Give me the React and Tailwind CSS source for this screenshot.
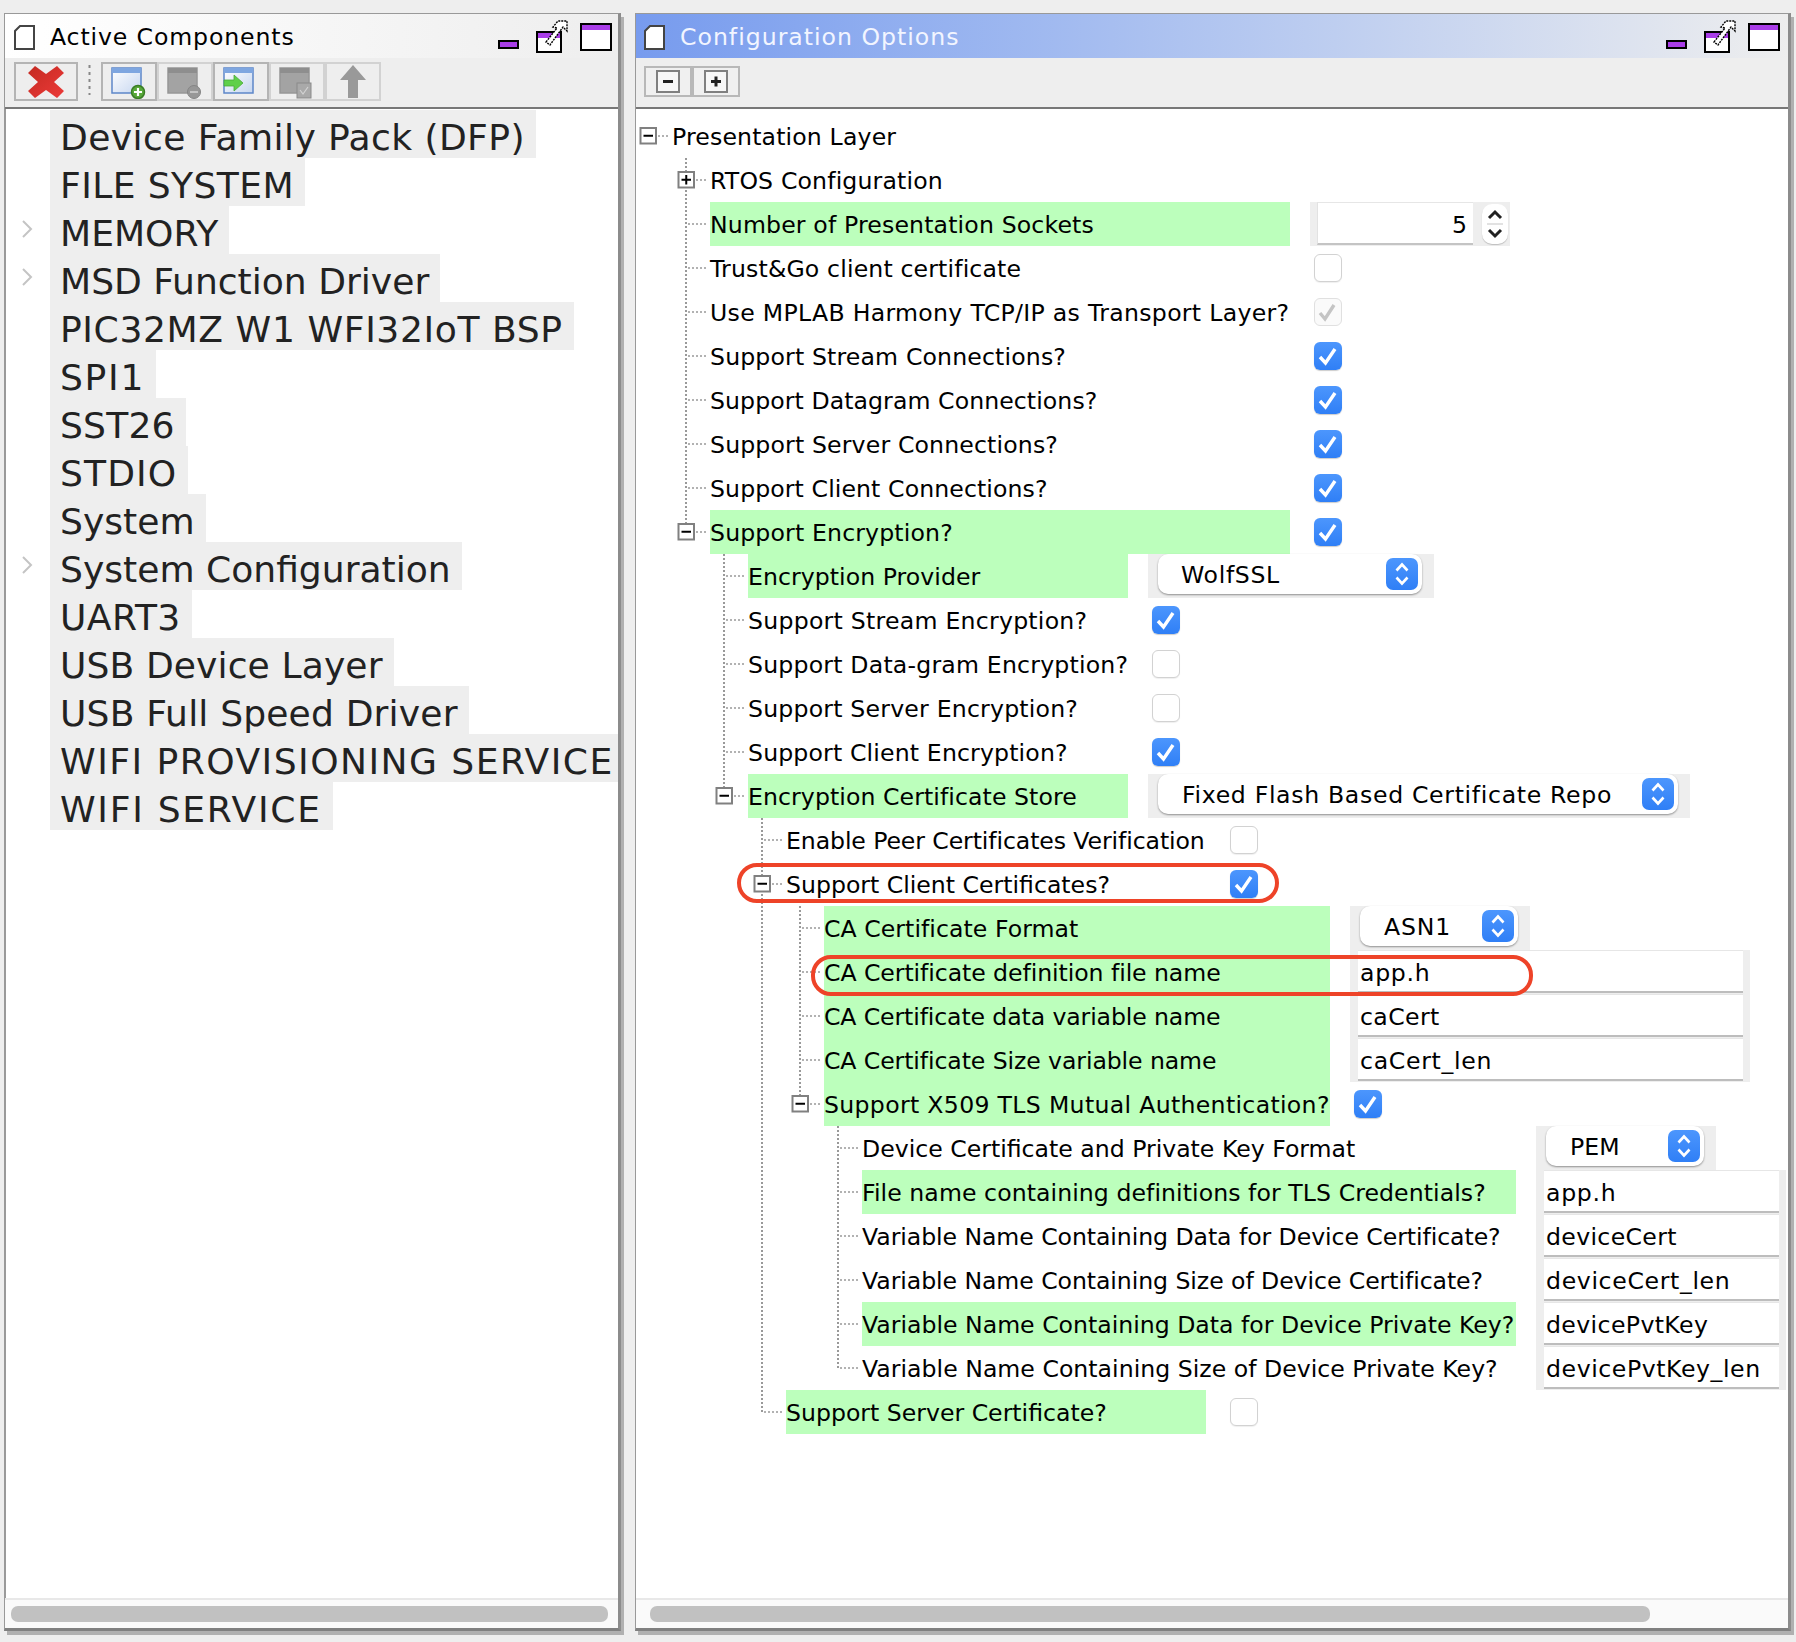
const leftItems = [
  { name: "Device Family Pack (DFP)", track: "tracking-[0.4px]" },
  { name: "FILE SYSTEM", track: "tracking-[0.4px]" },
  { name: "MEMORY" },
  { name: "MSD Function Driver" },
  { name: "PIC32MZ W1 WFI32IoT BSP", track: "tracking-[0.6px]" },
  { name: "SPI1", track: "tracking-[1.7px]" },
  { name: "SST26", track: "tracking-[0.2px]" },
  { name: "STDIO", track: "tracking-[1.1px]" },
  { name: "System" },
  { name: "System Configuration" },
  { name: "UART3", track: "tracking-[0.45px]" },
  { name: "USB Device Layer", track: "tracking-[0.1px]" },
  { name: "USB Full Speed Driver", track: "tracking-[0.16px]" },
  { name: "WIFI PROVISIONING SERVICE", track: "tracking-[1.46px]" },
  { name: "WIFI SERVICE", track: "tracking-[1.7px]" },
];

const hasChevron = ["MEMORY", "MSD Function Driver", "System Configuration"];

const L1 = 580;
const L2 = 380;
const L3 = 420;
const L4 = 506;
const L5 = 654;

const tree = {
  label: "Presentation Layer",
  open: true,
  children: [
    { label: "RTOS Configuration", closed: true },
    { label: "Number of Presentation Sockets", green: true, w: L1, control: { type: "spinner", value: "5" } },
    { label: "Trust&Go client certificate", w: L1, control: { type: "check" } },
    { label: "Use MPLAB Harmony TCP/IP as Transport Layer?", track: "tracking-[0.3px]", w: L1, control: { type: "disabled" } },
    { label: "Support Stream Connections?", w: L1, control: { type: "check", on: true } },
    { label: "Support Datagram Connections?", track: "tracking-[0.08px]", w: L1, control: { type: "check", on: true } },
    { label: "Support Server Connections?", w: L1, control: { type: "check", on: true } },
    { label: "Support Client Connections?", track: "tracking-[0.1px]", w: L1, control: { type: "check", on: true } },
    {
      label: "Support Encryption?",
      green: true,
      open: true,
      w: L1,
      control: { type: "check", on: true },
      children: [
        { label: "Encryption Provider", track: "tracking-[0.05px]", green: true, w: L2, control: { type: "select", value: "WolfSSL", width: "w-[286px]", pad: "pl-[23px]" } },
        { label: "Support Stream Encryption?", track: "tracking-[0.25px]", w: L2, control: { type: "check", on: true } },
        { label: "Support Data-gram Encryption?", track: "tracking-[0.2px]", w: L2, control: { type: "check" } },
        { label: "Support Server Encryption?", track: "tracking-[0.2px]", w: L2, control: { type: "check" } },
        { label: "Support Client Encryption?", track: "tracking-[0.15px]", w: L2, control: { type: "check", on: true } },
        {
          label: "Encryption Certificate Store",
          track: "tracking-[0.08px]",
          green: true,
          open: true,
          w: L2,
          control: { type: "select", value: "Fixed Flash Based Certificate Repo", track: "tracking-[0.67px]", width: "w-[542px]", pad: "pl-[24px]" },
          children: [
            { label: "Enable Peer Certificates Verification", track: "tracking-[-0.1px]", w: L3, control: { type: "check" } },
            {
              label: "Support Client Certificates?",
              track: "tracking-normal",
              open: true,
              w: L3,
              control: { type: "check", on: true },
              children: [
                { label: "CA Certificate Format", track: "tracking-[0.05px]", green: true, w: L4, control: { type: "select", value: "ASN1", track: "tracking-[0.85px]", width: "w-[180px]", pad: "pl-[24px]" } },
                { label: "CA Certificate definition file name", track: "tracking-[-0.07px]", green: true, w: L4, control: { type: "text", value: "app.h", track: "tracking-[0.7px]", width: "w-[400px]" } },
                { label: "CA Certificate data variable name", track: "tracking-[-0.12px]", green: true, w: L4, control: { type: "text", value: "caCert", track: "tracking-[0.4px]", width: "w-[400px]" } },
                { label: "CA Certificate Size variable name", track: "tracking-[-0.1px]", green: true, w: L4, control: { type: "text", value: "caCert_len", track: "tracking-[0.7px]", width: "w-[400px]" } },
                {
                  label: "Support X509 TLS Mutual Authentication?",
                  track: "tracking-[0.32px]",
                  green: true,
                  open: true,
                  w: L4,
                  control: { type: "check", on: true },
                  children: [
                    { label: "Device Certificate and Private Key Format", track: "tracking-normal", w: L5, control: { type: "select", value: "PEM", track: "tracking-normal", width: "w-[180px]", pad: "pl-[24px]" } },
                    { label: "File name containing definitions for TLS Credentials?", track: "tracking-[0.07px]", green: true, w: L5, control: { type: "text", value: "app.h", track: "tracking-[0.7px]", width: "w-[250px]" } },
                    { label: "Variable Name Containing Data for Device Certificate?", track: "tracking-[-0.07px]", w: L5, control: { type: "text", value: "deviceCert", track: "tracking-[0.34px]", width: "w-[250px]" } },
                    { label: "Variable Name Containing Size of Device Certificate?", track: "tracking-[-0.07px]", w: L5, control: { type: "text", value: "deviceCert_len", track: "tracking-[0.65px]", width: "w-[250px]" } },
                    { label: "Variable Name Containing Data for Device Private Key?", track: "tracking-normal", green: true, w: L5, control: { type: "text", value: "devicePvtKey", track: "tracking-[0.38px]", width: "w-[250px]" } },
                    { label: "Variable Name Containing Size of Device Private Key?", track: "tracking-[0.02px]", w: L5, control: { type: "text", value: "devicePvtKey_len", track: "tracking-[0.57px]", width: "w-[250px]" } },
                  ],
                },
              ],
            },
            { label: "Support Server Certificate?", track: "tracking-normal", green: true, w: L3, control: { type: "check" } },
          ],
        },
      ],
    },
  ],
};

function PageIcon() {
  return (
    <svg width="21" height="25" viewBox="0 0 21 25" className="shrink-0">
      <path d="M6 1H20V24H1V6Z" fill="#fff" stroke="#444" strokeWidth="2" />
    </svg>
  );
}

function MinIcon() {
  return (
    <svg width="21" height="9" viewBox="0 0 21 9" className="mt-[26px] shrink-0">
      <rect x="1" y="1" width="19" height="7" fill="#a93de8" stroke="#000" strokeWidth="2" />
    </svg>
  );
}

function RestoreIcon() {
  return (
    <svg width="32" height="33" viewBox="0 0 32 33" className="ml-[17px] mt-[6px] shrink-0">
      <rect x="1" y="12" width="24" height="20" fill="#fff" stroke="#000" strokeWidth="2" />
      <rect x="2" y="13" width="22" height="5" fill="#a93de8" />
      <path d="M10 22L21 8L17 7L22 1H31V11L27 7L14 25Z" fill="#fff" stroke="#000" strokeWidth="1.4" strokeDasharray="2 1" />
    </svg>
  );
}

function MaxIcon() {
  return (
    <svg width="32" height="28" viewBox="0 0 32 28" className="ml-3 mt-[9px] shrink-0">
      <rect x="1" y="1" width="30" height="26" fill="#fff" stroke="#000" strokeWidth="2" />
      <rect x="2" y="2" width="28" height="5" fill="#a93de8" />
    </svg>
  );
}

function WindowShape({ gray, children }) {
  const frame = gray ? "#979797" : "#5d87c9";
  return (
    <svg width="36" height="32" viewBox="0 0 36 32" className="mt-[2px]">
      <defs>
        <linearGradient id="winfill" x1="0" y1="0" x2="1" y2="1">
          <stop offset="0" stopColor="#ffffff" />
          <stop offset="1" stopColor="#c6d6f0" />
        </linearGradient>
      </defs>
      <rect x="1" y="1" width="29" height="25" fill={gray ? "#a3a3a3" : "url(#winfill)"} stroke={frame} strokeWidth="1.5" />
      <rect x="1" y="1" width="29" height="5" fill={gray ? "#8e8e8e" : "#7ea6e0"} />
      {children}
    </svg>
  );
}

function ToolButton({ enabled, children }) {
  return (
    <div className={`flex h-[39px] w-14 items-center justify-center border-2 ${enabled ? "border-[#b4b4b4]" : "border-[#d2d2d2]"}`}>
      {children}
    </div>
  );
}

function LeftToolbar() {
  return (
    <div className="flex h-[51px] items-start border-b-2 border-[#777] bg-[#eeeeee] pl-[9px] pt-1">
      <div className="flex h-[39px] w-16 items-center justify-center border-2 border-[#b4b4b4]">
        <svg width="38" height="34" viewBox="0 0 38 34">
          <defs>
            <linearGradient id="xfill" x1="0" y1="0" x2="1" y2="1">
              <stop offset="0" stopColor="#c42a22" />
              <stop offset="1" stopColor="#ec3a38" />
            </linearGradient>
          </defs>
          <path d="M1 8L8 1L19 9L30 1L37 8L27 17L37 26L30 33L19 25L8 33L1 26L11 17Z" fill="url(#xfill)" />
        </svg>
      </div>
      <svg width="3" height="30" viewBox="0 0 3 30" className="ml-[10px] mr-[10px] mt-[3px] shrink-0">
        <line x1="1.5" y1="0" x2="1.5" y2="30" stroke="#888" strokeWidth="2" strokeDasharray="3 4" />
      </svg>
      <ToolButton enabled>
        <WindowShape>
          <circle cx="27" cy="25" r="6.5" fill="#58a83a" stroke="#3a7d25" strokeWidth="1.5" />
          <path d="M27 21V29M23 25H31" stroke="#fff" strokeWidth="2.2" />
        </WindowShape>
      </ToolButton>
      <ToolButton>
        <WindowShape gray>
          <circle cx="27" cy="25" r="6.5" fill="#979797" stroke="#858585" />
          <path d="M23 25H31" stroke="#c4c4c4" strokeWidth="2" />
        </WindowShape>
      </ToolButton>
      <ToolButton enabled>
        <WindowShape>
          <path d="M1 13H11V8L20 16L11 24V19H1Z" fill="#5fd04a" stroke="#4aa838" strokeWidth="0.8" />
        </WindowShape>
      </ToolButton>
      <ToolButton>
        <WindowShape gray>
          <rect x="18" y="16" width="14" height="15" fill="#a9a9a9" stroke="#8a8a8a" />
          <path d="M21 23L24 27L29 20" fill="none" stroke="#d2d2d2" strokeWidth="1.2" />
        </WindowShape>
      </ToolButton>
      <ToolButton>
        <svg width="30" height="38" viewBox="0 0 30 38">
          <path d="M15 2L28 17H20V35H10V17H2Z" fill="#999" />
        </svg>
      </ToolButton>
    </div>
  );
}

function ExpandButton({ plus }) {
  return (
    <div className="flex h-[31px] w-12 items-center justify-center border-2 border-[#b8b8b8] bg-[#f0f0f0]">
      <svg width="24" height="23" viewBox="0 0 24 23">
        <rect x="1" y="1" width="22" height="21" fill="#f7f7f7" stroke="#808080" strokeWidth="2" />
        <path d={plus ? "M7 11.5H17M12 6.5V16.5" : "M7 11.5H17"} stroke="#222" strokeWidth="3" />
      </svg>
    </div>
  );
}

function RightToolbar() {
  return (
    <div className="flex h-[51px] items-start border-b-2 border-[#777] bg-[#eeeeee] pl-2 pt-2">
      <ExpandButton />
      <ExpandButton plus />
    </div>
  );
}

function ScrollBar({ thumb }) {
  return (
    <div className="h-[30px] shrink-0 border-t-2 border-[#e8e8e8] bg-[#fafafa] pt-[6px]">
      <div className={`h-4 rounded-[7px] bg-[#c1c1c1] ${thumb}`} />
    </div>
  );
}

// one indent column of the tree, drawn the way the swing tree paints it
function Connector({ through, branch, last, box }) {
  return (
    <svg width="38" height="44" viewBox="0 0 38 44" className="shrink-0">
      {through && (
        <line x1="14" y1="0" x2="14" y2={last ? 22 : 44} stroke="#999" strokeWidth="2" strokeDasharray="2 2" />
      )}
      {branch && <line x1="16" y1="22" x2="34" y2="22" stroke="#999" strokeWidth="1.5" strokeDasharray="2 2" />}
      {box && (
        <g>
          <rect x="6.5" y="14" width="15.5" height="15.5" fill="#fff" stroke="#808080" strokeWidth="2" />
          <path d={box === "plus" ? "M9.5 21.75H19M14.25 17V26.5" : "M9.5 21.75H19"} stroke="#000" strokeWidth="2" />
        </g>
      )}
    </svg>
  );
}

function CheckBox({ on, disabled }) {
  if (disabled) {
    return (
      <div className="ml-1 mt-2 h-7 w-7 rounded-[6px] border border-[#e0e0e0] bg-[#fafafa]">
        <svg width="26" height="26" viewBox="0 0 26 26">
          <path d="M5 14L10 20L19 6" fill="none" stroke="#c4c4c4" strokeWidth="3.4" />
        </svg>
      </div>
    );
  }
  if (on) {
    return (
      <div className="ml-1 mt-2 h-7 w-7 rounded-[6px] bg-linear-to-b from-[#4c96fd] to-[#2f7ff6] shadow-[0_1px_1px_#0003]">
        <svg width="28" height="28" viewBox="0 0 28 28">
          <path d="M6 15L11.5 21L21 7" fill="none" stroke="#fff" strokeWidth="3.4" />
        </svg>
      </div>
    );
  }
  return <div className="ml-1 mt-2 h-7 w-7 rounded-[6px] border border-[#d2d2d2] bg-white shadow-[0_1px_1px_#0001]" />;
}

function SelectBox({ value, width, pad, track }) {
  return (
    <div className={`h-full bg-[#eeeeee] pl-[10px] pr-3 ${width}`}>
      <div className={`flex h-10 items-center justify-between rounded-[10px] bg-white pr-[4px] shadow-[0_1px_2px_#0006] ${pad}`}>
        <span className={`pt-1 ${track || "tracking-[0.65px]"}`}>{value}</span>
        <div className="flex h-8 w-8 items-center justify-center rounded-[7px] bg-linear-to-b from-[#4c96fd] to-[#2f7ff6]">
          <svg width="16" height="26" viewBox="0 0 16 26">
            <path d="M2.5 9.5L8 3.5L13.5 9.5M2.5 16.5L8 22.5L13.5 16.5" fill="none" stroke="#fff" strokeWidth="2.6" />
          </svg>
        </div>
      </div>
    </div>
  );
}

function TextBox({ value, width, track }) {
  return (
    <div className={`h-full bg-[#eeeeee] pl-2 pr-[7px] ${width}`}>
      <div className={`flex h-[43px] items-center border-b-2 border-t border-b-[#bdbdbd] border-t-[#e6e6e6] bg-white pl-[2px] pt-[5px] ${track}`}>
        {value}
      </div>
    </div>
  );
}

function SpinnerBox({ value }) {
  return (
    <div className="flex h-full w-[200px] items-start bg-[#eeeeee] pl-[7px]">
      <div className="flex h-[43px] w-[156px] items-center justify-end border-b-2 border-l border-t border-b-[#c4c4c4] border-l-[#e2e2e2] border-t-[#e6e6e6] bg-white pr-[6px] pt-[5px]">
        {value}
      </div>
      <div className="ml-[9px] mt-[2px] flex h-10 w-[26px] flex-col items-center justify-center rounded-[10px] bg-white shadow-[0_1px_1px_#0003]">
        <svg width="16" height="34" viewBox="0 0 16 34">
          <path d="M2 11L8 5L14 11M2 23L8 29L14 23" fill="none" stroke="#222" strokeWidth="3" />
          <path d="M0 17H16" stroke="#e2e2e2" strokeWidth="2" />
        </svg>
      </div>
    </div>
  );
}

function Control({ control }) {
  if (control.type === "check") return <CheckBox on={control.on} />;
  if (control.type === "disabled") return <CheckBox disabled />;
  if (control.type === "spinner") return <SpinnerBox value={control.value} />;
  if (control.type === "select") return <SelectBox value={control.value} width={control.width} pad={control.pad} track={control.track} />;
  return <TextBox value={control.value} width={control.width} track={control.track} />;
}

function TreeNode({ node, guides, last, root }) {
  const box = node.open ? "minus" : node.closed ? "plus" : null;
  return (
    <>
      <div className="flex h-11 items-stretch">
        {guides.map((on, i) => (
          <Connector key={i} through={on} />
        ))}
        <Connector through={!root} last={last} branch box={box} />
        <div
          className={`flex items-center whitespace-nowrap pt-1 ${node.track || "tracking-[0.15px]"} ${node.green ? "bg-[#bcffbc]" : ""}`}
          style={node.w ? { width: node.w } : undefined}
        >
          {node.label}
        </div>
        {node.control && (
          <div className="ml-5 flex-none">
            <Control control={node.control} />
          </div>
        )}
      </div>
      {node.children &&
        node.children.map((child, i) => (
          <TreeNode
            key={child.label}
            node={child}
            guides={root ? [false] : [...guides, !last]}
            last={i === node.children.length - 1}
          />
        ))}
    </>
  );
}

function Panel({ className, children }) {
  return (
    <div className={`flex h-[1618px] flex-col border border-[#999] border-b-[3px] border-r-[3px] border-b-[#808080] border-r-[#8c8c8c] bg-white shadow-[3px_4px_0_#b0b0b0] ${className}`}>
      {children}
    </div>
  );
}

export default function App() {
  return (
    <div className="flex h-[1642px] w-[1796px] gap-[14px] overflow-hidden bg-[#eeeeee] pl-1 pt-[13px] font-['DejaVu_Sans',sans-serif] text-[23.6px] text-black">
      <Panel className="w-[617px]">
        <div className="flex h-11 shrink-0 bg-linear-to-r from-white to-[#eeeeee] pl-[9px] pr-[6px]">
          <div className="mt-[11px]">
            <PageIcon />
          </div>
          <span className="ml-[15px] mt-1 leading-[38px] tracking-[0.87px]">Active Components</span>
          <div className="ml-auto flex">
            <MinIcon />
            <RestoreIcon />
            <MaxIcon />
          </div>
        </div>
        <LeftToolbar />
        <div className="min-h-0 flex-1 overflow-hidden border-l border-[#9a9a9a] pl-[44px] pt-[1px] text-[36.1px] text-[#222]">
          {leftItems.map((item) => (
            <div key={item.name} className="relative flex h-12 items-center whitespace-nowrap">
              {hasChevron.includes(item.name) && (
                <svg width="14" height="18" viewBox="0 0 14 18" className="absolute left-[-30px] top-[14px]">
                  <path d="M3 1L11 9L3 17" fill="none" stroke="#c4c4c4" strokeWidth="2" />
                </svg>
              )}
              <span className={`inline-flex h-12 items-center bg-[#eeeeee] pl-[10px] pr-[11px] pt-[8px] ${item.track || ""}`}>{item.name}</span>
            </div>
          ))}
        </div>
        <ScrollBar thumb="ml-[6px] mr-[10px]" />
      </Panel>

      <Panel className="w-[1156px]">
        <div className="flex h-11 shrink-0 bg-linear-to-r from-[#779bee] to-[#eeeeee] pl-2 pr-2">
          <div className="mt-[11px]">
            <PageIcon />
          </div>
          <span className="ml-[15px] mt-1 leading-[38px] tracking-[1px] text-[#f2f5ff]">Configuration Options</span>
          <div className="ml-auto flex">
            <MinIcon />
            <RestoreIcon />
            <MaxIcon />
          </div>
        </div>
        <RightToolbar />
        <div className="relative min-h-0 flex-1 overflow-hidden pt-[5px]">
          <div className="ml-[-2px]">
            <TreeNode node={tree} guides={[]} last root />
          </div>
          <div className="absolute left-[101px] top-[754px] h-10 w-[542px] rounded-[20px] border-4 border-[#ee4328]" />
          <div className="absolute left-[175px] top-[846px] h-[41px] w-[722px] rounded-[20px] border-4 border-[#ee4328]" />
        </div>
        <ScrollBar thumb="ml-[14px] mr-[138px]" />
      </Panel>
    </div>
  );
}
